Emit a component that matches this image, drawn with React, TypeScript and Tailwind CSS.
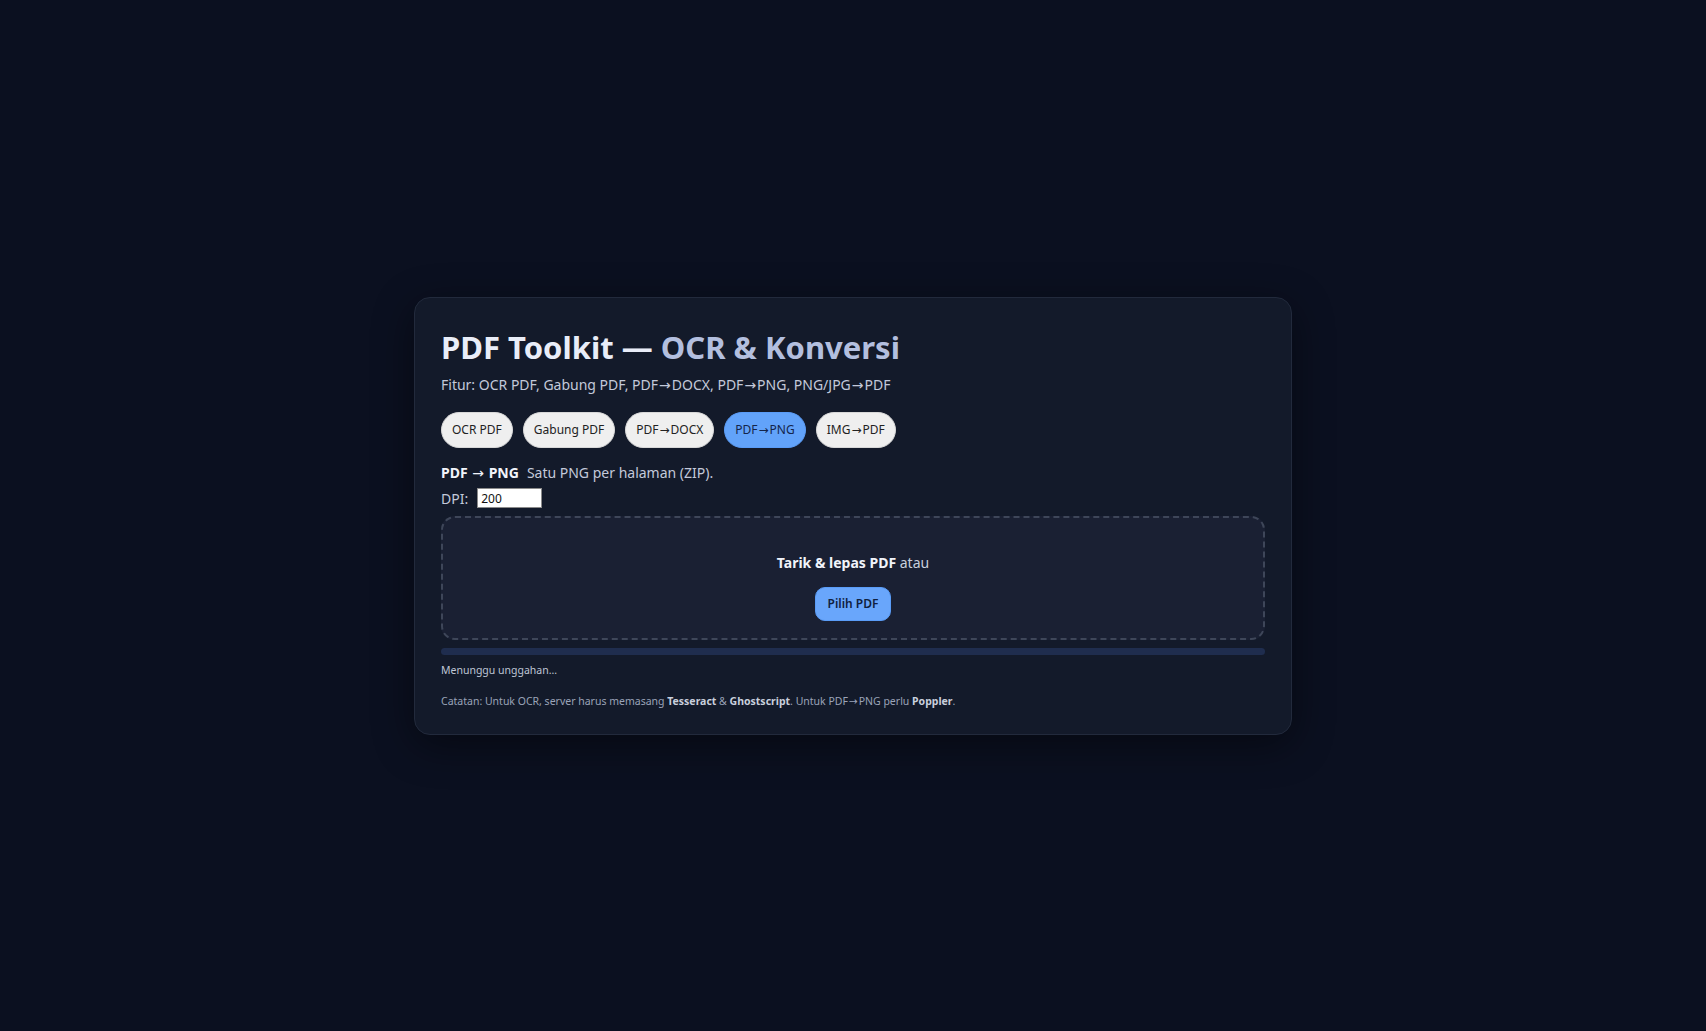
import { useState } from "react";

const tools = ["OCR PDF", "Gabung PDF", "PDF→DOCX", "PDF→PNG", "IMG→PDF"];

// Noto Sans draws a tiny arrow; DejaVu Sans has a proper mid-height one
function Arrowed({ text }: { text: string }) {
  const parts = text.split("→");
  return (
    <>
      {parts.map((p, i) => (
        <span key={i}>
          {i > 0 && (
            <span className="mx-[1px]" style={{ fontFamily: '"DejaVu Sans", sans-serif', fontWeight: 400 }}>
              →
            </span>
          )}
          {p}
        </span>
      ))}
    </>
  );
}

export default function App() {
  const [active, setActive] = useState("PDF→PNG");
  const [dpi, setDpi] = useState("200");

  return (
    <div
      className="min-h-screen w-full bg-[#0b1020] flex items-center justify-center"
      style={{ fontFamily: '"Segoe UI", "Noto Sans", sans-serif' }}
    >
      <div className="w-[878px] rounded-2xl border border-[#222a3c] bg-[#131a2a] px-[26px] pt-[30px] pb-[25px] shadow-[0_10px_40px_rgba(0,0,0,0.45)]">
        <h1 className="text-[31px] font-bold leading-[38px] text-[#e9edf8]">
          PDF Toolkit — <span className="text-[#b3bfdf]">OCR &amp; Konversi</span>
        </h1>
        <p className="mt-[9px] text-[14px] leading-[20px] text-[#c3c9da]">
          <Arrowed text="Fitur: OCR PDF, Gabung PDF, PDF→DOCX, PDF→PNG, PNG/JPG→PDF" />
        </p>

        <div className="mt-[17px] flex gap-[10px]">
          {tools.map((t) => (
            <button
              key={t}
              onClick={() => setActive(t)}
              className={
                t === active
                  ? "h-[36px] rounded-full border border-[#5a9cf7] bg-[#62a3fa] px-[10px] text-[12px] text-[#14254a]"
                  : "h-[36px] rounded-full border border-[#d8d8d8] bg-[#efefef] px-[10px] text-[12px] text-[#222222]"
              }
            >
              <Arrowed text={t} />
            </button>
          ))}
        </div>

        <div className="mt-[15px] text-[14px] leading-[20px] text-[#c3c9da]">
          <b className="font-bold text-[#f1f4fb]">
            <Arrowed text="PDF → PNG" />
          </b>
          <span className="ml-[8px]">Satu PNG per halaman (ZIP).</span>
        </div>

        <div className="mt-[5px] flex items-center gap-[9px] text-[14px] text-[#c3c9da]">
          <span>DPI:</span>
          <input
            value={dpi}
            onChange={(e) => setDpi(e.target.value)}
            className="h-[20px] w-[65px] border border-[#8a8a8a] bg-white px-[3px] text-[12px] text-[#111] outline-none"
          />
        </div>

        <div className="mt-[7px] flex h-[124px] flex-col items-center rounded-[14px] border-2 border-dashed border-[#3e4659] bg-[#1a2033] pt-[35px]">
          <div className="text-[14px] leading-[20px] text-[#c9cfdd]">
            <b className="font-bold text-[#f1f4fb]">Tarik &amp; lepas PDF</b> atau
          </div>
          <button className="mt-[14px] h-[34px] rounded-[10px] border border-[#5a9cf7] bg-[#69a6fb] px-[12px] text-[12px] font-semibold text-[#10213f]">
            Pilih PDF
          </button>
        </div>

        <div className="mt-[8px] h-[7px] w-full rounded-full bg-[#1f2d4e]" />

        <div className="mt-[7px] text-[10.5px] leading-[16px] text-[#bfc5d4]">Menunggu unggahan...</div>

        <div className="mt-[16px] text-[10.5px] leading-[15px] text-[#9aa3b8]">
          Catatan: Untuk OCR, server harus memasang <b className="font-bold text-[#c9cfdd]">Tesseract</b> &amp;{" "}
          <b className="font-bold text-[#c9cfdd]">Ghostscript</b>. <Arrowed text="Untuk PDF→PNG perlu" />{" "}
          <b className="font-bold text-[#c9cfdd]">Poppler</b>.
        </div>
      </div>
    </div>
  );
}
